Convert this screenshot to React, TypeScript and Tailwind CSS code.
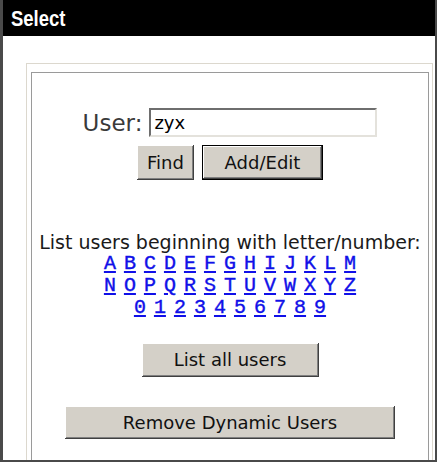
const LETTER_ROWS = [
  ['A', 'B', 'C', 'D', 'E', 'F', 'G', 'H', 'I', 'J', 'K', 'L', 'M'],
  ['N', 'O', 'P', 'Q', 'R', 'S', 'T', 'U', 'V', 'W', 'X', 'Y', 'Z'],
  ['0', '1', '2', '3', '4', '5', '6', '7', '8', '9'],
];

// classic 3d button bevel
const bevel =
  'bg-[#d4d0c8] text-[#111] shadow-[inset_-1px_-1px_#404040,inset_1px_1px_#ffffff,inset_-2px_-2px_#808080] text-[18px] leading-none';

function LetterLinks() {
  return (
    <div className="flex flex-col items-center font-['Liberation_Mono',monospace] text-[20px] leading-[22px] text-[#1010e8] [-webkit-text-stroke:0.4px_#1010e8]">
      {LETTER_ROWS.map((row, i) => (
        <div key={i} className="flex gap-[8px]">
          {row.map((ch) => (
            <a key={ch} href={`#${ch}`} className="underline underline-offset-[2px]">
              {ch}
            </a>
          ))}
        </div>
      ))}
    </div>
  );
}

export default function App() {
  return (
    <div className="w-[439px] h-[464px] bg-white overflow-hidden font-['DejaVu_Sans',Verdana,sans-serif]">
      <div className="w-[437px] h-[462px] flex flex-col border-l-[3px] border-r-[2px] border-b-[2px] border-[#4a4a4a] overflow-hidden">
        {/* title bar */}
        <div className="h-[36px] shrink-0 bg-black flex items-center pl-[8px]">
          <span className="inline-block origin-left scale-x-[0.84] text-white text-[22px] font-bold font-['Liberation_Sans',Arial,sans-serif]">
            Select
          </span>
        </div>

        {/* body */}
        <div className="flex-1 min-h-0 flex flex-col pl-[23px] pt-[27px] pr-[2px]">
          <div className="flex-1 flex flex-col border-l border-t border-r border-[#dcd8ce] pl-[4px] pt-[8px] pr-[3px]">
            <div className="flex-1 flex flex-col items-center border-l border-t border-r border-[#9a9a9a]">
              {/* user search */}
              <div className="mt-[35px] flex items-center gap-[7px]">
                <label className="text-[23px] leading-none text-[#3a3a3a] pt-[1px]">User:</label>
                <input
                  defaultValue="zyx"
                  className="w-[228px] h-[29px] px-[3px] text-[18px] text-black bg-white border-2 border-t-[#6e6e6e] border-l-[#6e6e6e] border-b-[#e4e2dc] border-r-[#e4e2dc] outline-none"
                />
              </div>
              <div className="mt-[8px] flex gap-[8px]">
                <button className={`${bevel} w-[57px] h-[35px]`}>Find</button>
                <button className={`${bevel} w-[121px] h-[35px] border border-black`}>Add/Edit</button>
              </div>

              {/* letter index */}
              <p className="mt-[51px] text-[19px] leading-[22px] text-[#1a1a1a]">
                List users beginning with letter/number:
              </p>
              <LetterLinks />

              <button className={`${bevel} mt-[24px] w-[177px] h-[34px]`}>List all users</button>
              <button className={`${bevel} mt-[29px] w-[330px] h-[33px]`}>Remove Dynamic Users</button>
            </div>
          </div>
        </div>
      </div>
    </div>
  );
}
